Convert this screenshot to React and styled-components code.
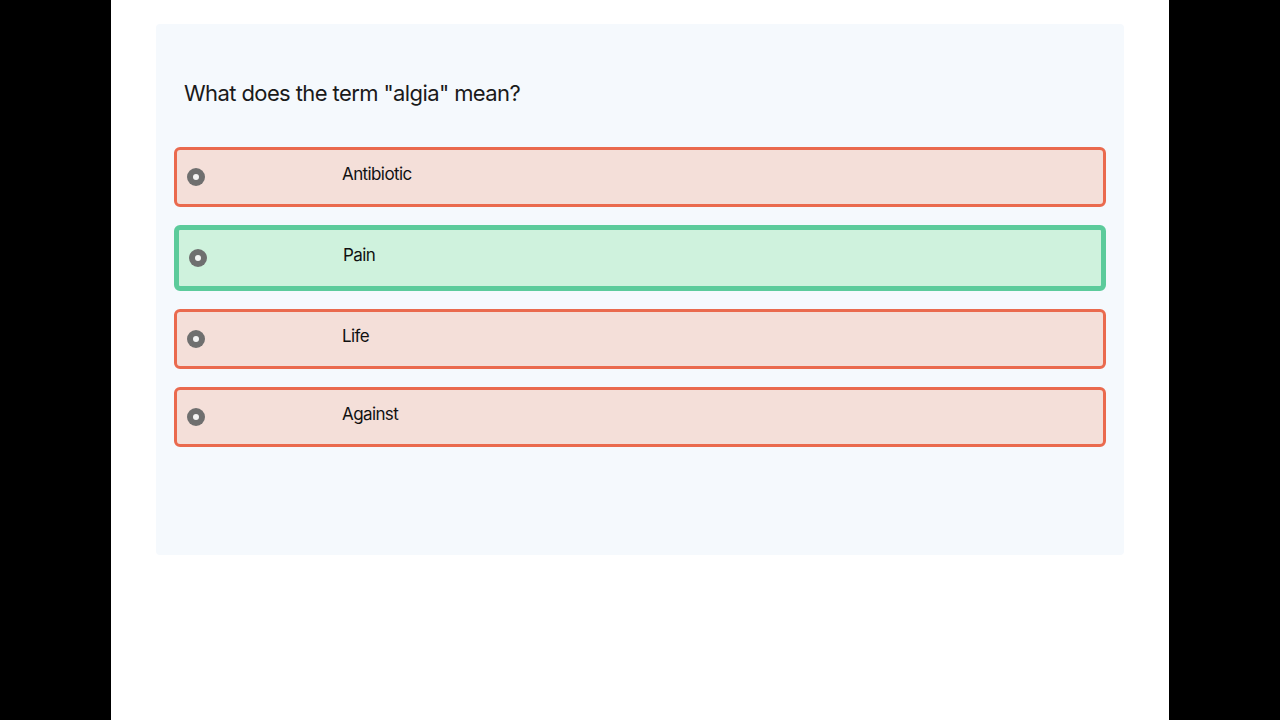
import styled, { createGlobalStyle } from 'styled-components';

const GlobalStyle = createGlobalStyle`
  html, body {
    margin: 0;
    padding: 0;
    background: #000;
    font-family: Inter, "Noto Sans", sans-serif;
  }
`

const Screen = styled.div`
  display: flex;
  justify-content: center;
  height: 720px;
  background: #000;
`

const Sheet = styled.div`
  width: 1058px;
  height: 720px;
  background: #fff;
  padding: 24px 45px 0;
  box-sizing: border-box;
`

const Card = styled.div`
  height: 531px;
  background: #f5f9fd;
  border-radius: 4px;
  padding: 56px 18px 0;
  box-sizing: border-box;
`

const Question = styled.h2`
  margin: 0 0 40px 10px;
  font-size: 22px;
  line-height: 27px;
  font-weight: 400;
  letter-spacing: -0.6px;
  color: #1a1a1a;
`

const OptionList = styled.div`
  display: flex;
  flex-direction: column;
  gap: 18px;
`

const Option = styled.div`
  display: flex;
  align-items: center;
  height: ${p => (p.$correct ? '66px' : '60px')};
  box-sizing: border-box;
  border: ${p => (p.$correct ? '5px solid #5ccb9b' : '3px solid #ea6a4e')};
  background: ${p => (p.$correct ? '#cff2dd' : '#f4dfd9')};
  border-radius: 6px;
  padding-left: 10px;
`

const Radio = styled.span`
  width: 18px;
  height: 18px;
  border-radius: 50%;
  background: #6f6f6f;
  display: flex;
  align-items: center;
  justify-content: center;
  flex-shrink: 0;

  &::after {
    content: '';
    width: 6px;
    height: 6px;
    border-radius: 50%;
    background: #f4f4f4;
  }
`

const Label = styled.span`
  margin-left: ${p => (p.$correct ? '136px' : '137px')};
  padding-bottom: 7px;
  font-size: 17px;
  letter-spacing: -0.6px;
  color: #111;
`

const options = [
  { text: 'Antibiotic' },
  { text: 'Pain', correct: true },
  { text: 'Life' },
  { text: 'Against' },
]

export default function App() {
  return (
    <>
      <GlobalStyle />
      <Screen>
        <Sheet>
          <Card>
            <Question>What does the term "algia" mean?</Question>
            <OptionList>
              {options.map(o => (
                <Option key={o.text} $correct={o.correct}>
                  <Radio />
                  <Label $correct={o.correct}>{o.text}</Label>
                </Option>
              ))}
            </OptionList>
          </Card>
        </Sheet>
      </Screen>
    </>
  )
}
